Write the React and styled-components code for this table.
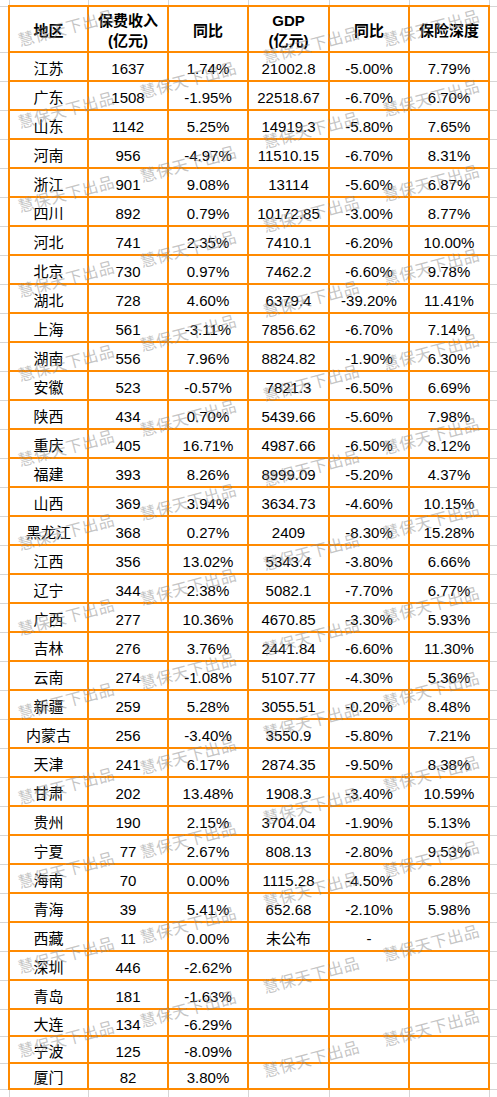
import React from 'react';
import styled, { createGlobalStyle } from 'styled-components';

const ORANGE = '#ff8a00';
const GRID = '#d6d6d6';

const COLS = [9, 79, 80, 80, 81, 80, 80, 8];

const HEADERS = [['地区'], ['保费收入', '(亿元)'], ['同比'], ['GDP', '(亿元)'], ['同比'], ['保险深度']];

const ROWS = [
  ['江苏', '1637', '1.74%', '21002.8', '-5.00%', '7.79%'],
  ['广东', '1508', '-1.95%', '22518.67', '-6.70%', '6.70%'],
  ['山东', '1142', '5.25%', '14919.3', '-5.80%', '7.65%'],
  ['河南', '956', '-4.97%', '11510.15', '-6.70%', '8.31%'],
  ['浙江', '901', '9.08%', '13114', '-5.60%', '6.87%'],
  ['四川', '892', '0.79%', '10172.85', '-3.00%', '8.77%'],
  ['河北', '741', '2.35%', '7410.1', '-6.20%', '10.00%'],
  ['北京', '730', '0.97%', '7462.2', '-6.60%', '9.78%'],
  ['湖北', '728', '4.60%', '6379.4', '-39.20%', '11.41%'],
  ['上海', '561', '-3.11%', '7856.62', '-6.70%', '7.14%'],
  ['湖南', '556', '7.96%', '8824.82', '-1.90%', '6.30%'],
  ['安徽', '523', '-0.57%', '7821.3', '-6.50%', '6.69%'],
  ['陕西', '434', '0.70%', '5439.66', '-5.60%', '7.98%'],
  ['重庆', '405', '16.71%', '4987.66', '-6.50%', '8.12%'],
  ['福建', '393', '8.26%', '8999.09', '-5.20%', '4.37%'],
  ['山西', '369', '3.94%', '3634.73', '-4.60%', '10.15%'],
  ['黑龙江', '368', '0.27%', '2409', '-8.30%', '15.28%'],
  ['江西', '356', '13.02%', '5343.4', '-3.80%', '6.66%'],
  ['辽宁', '344', '2.38%', '5082.1', '-7.70%', '6.77%'],
  ['广西', '277', '10.36%', '4670.85', '-3.30%', '5.93%'],
  ['吉林', '276', '3.76%', '2441.84', '-6.60%', '11.30%'],
  ['云南', '274', '-1.08%', '5107.77', '-4.30%', '5.36%'],
  ['新疆', '259', '5.28%', '3055.51', '-0.20%', '8.48%'],
  ['内蒙古', '256', '-3.40%', '3550.9', '-5.80%', '7.21%'],
  ['天津', '241', '6.17%', '2874.35', '-9.50%', '8.38%'],
  ['甘肃', '202', '13.48%', '1908.3', '-3.40%', '10.59%'],
  ['贵州', '190', '2.15%', '3704.04', '-1.90%', '5.13%'],
  ['宁夏', '77', '2.67%', '808.13', '-2.80%', '9.53%'],
  ['海南', '70', '0.00%', '1115.28', '-4.50%', '6.28%'],
  ['青海', '39', '5.41%', '652.68', '-2.10%', '5.98%'],
  ['西藏', '11', '0.00%', '未公布', '-', ''],
  ['深圳', '446', '-2.62%', '', '', ''],
  ['青岛', '181', '-1.63%', '', '', ''],
  ['大连', '134', '-6.29%', '', '', ''],
  ['宁波', '125', '-8.09%', '', '', ''],
  ['厦门', '82', '3.80%', '', '', ''],
];

// last few rows of the sheet are a bit shorter
const rowHeight = (i) => (i < 33 ? 29 : i === 35 ? 26 : 27);

// watermark tiles: x centre, first y centre
const MARK_COLS = [
  { x: 66, y: 24 },
  { x: 188, y: 78.5 },
  { x: 311, y: 44 },
  { x: 431, y: 12.5 },
];
const MARK_STEP = 84.5;

const marks = [];
MARK_COLS.forEach((c, ci) => {
  for (let y = c.y; y < 1080; y += MARK_STEP) {
    // keep the top tile inside the page
    marks.push({ key: `${ci}-${y}`, x: c.x, y: Math.max(y, 27) });
  }
});

const GlobalStyle = createGlobalStyle`
  html, body {
    margin: 0;
    padding: 0;
    background: #ffffff;
  }
  body {
    font-family: "Liberation Sans", "Noto Sans CJK SC", sans-serif;
    color: #000;
  }
`;

const Page = styled.div`
  position: relative;
  width: 497px;
  height: 1097px;
  overflow: hidden;
  background: #fff;
`;

const Sheet = styled.table`
  border-collapse: collapse;
  table-layout: fixed;
  width: 497px;
`;

const Row = styled.tr`
  height: ${(p) => p.$h}px;
`;

const Gutter = styled.td`
  padding: 0;
  border: 1px solid ${GRID};
  ${(p) => p.$side === 'left' && 'border-left: none;'}
  ${(p) => p.$side === 'right' && 'border-right: none;'}
  ${(p) => p.$side === 'top' && 'border-top: none;'}
  ${(p) => p.$side === 'bottom' && 'border-bottom: none;'}
  ${(p) => p.$side === 'corner' && 'border: none;'}
`;

const Cell = styled.td`
  border: 2px solid ${ORANGE};
  padding: 4px 0 0;
  text-align: center;
  vertical-align: middle;
  font-size: 15px;
  line-height: 18px;
  white-space: nowrap;
  overflow: hidden;
`;

const HeadCell = styled(Cell)`
  font-weight: bold;
  line-height: 20px;
  padding-top: 4px;
`;

const Watermark = styled.span`
  position: absolute;
  transform: translate(-50%, -50%) rotate(-15deg);
  font-family: "Noto Sans CJK SC", sans-serif;
  font-size: 16px;
  line-height: 16px;
  letter-spacing: 0.5px;
  color: rgba(140, 140, 140, 0.5);
  white-space: nowrap;
  pointer-events: none;
`;

const GutterRow = ({ side, h }) => (
  <Row $h={h}>
    <Gutter $side="corner" />
    {HEADERS.map((_, i) => (
      <Gutter key={i} $side={side} />
    ))}
    <Gutter $side="corner" />
  </Row>
);

export default function App() {
  return (
    <Page>
      <GlobalStyle />
      <Sheet>
        <colgroup>
          {COLS.map((w, i) => (
            <col key={i} style={{ width: w }} />
          ))}
        </colgroup>
        <tbody>
          <GutterRow side="top" h={6} />
          <Row $h={45}>
            <Gutter $side="left" />
            {HEADERS.map((lines, i) => (
              <HeadCell key={i}>
                {lines.map((l, j) => (
                  <div key={j}>{l}</div>
                ))}
              </HeadCell>
            ))}
            <Gutter $side="right" />
          </Row>
          {ROWS.map((r, i) => (
            <Row key={r[0]} $h={rowHeight(i)}>
              <Gutter $side="left" />
              {r.map((v, j) => (
                <Cell key={j}>{v}</Cell>
              ))}
              <Gutter $side="right" />
            </Row>
          ))}
          <GutterRow side="bottom" h={12} />
        </tbody>
      </Sheet>
      {marks.map((m) => (
        <Watermark key={m.key} style={{ left: m.x, top: m.y }}>
          慧保天下出品
        </Watermark>
      ))}
    </Page>
  );
}
